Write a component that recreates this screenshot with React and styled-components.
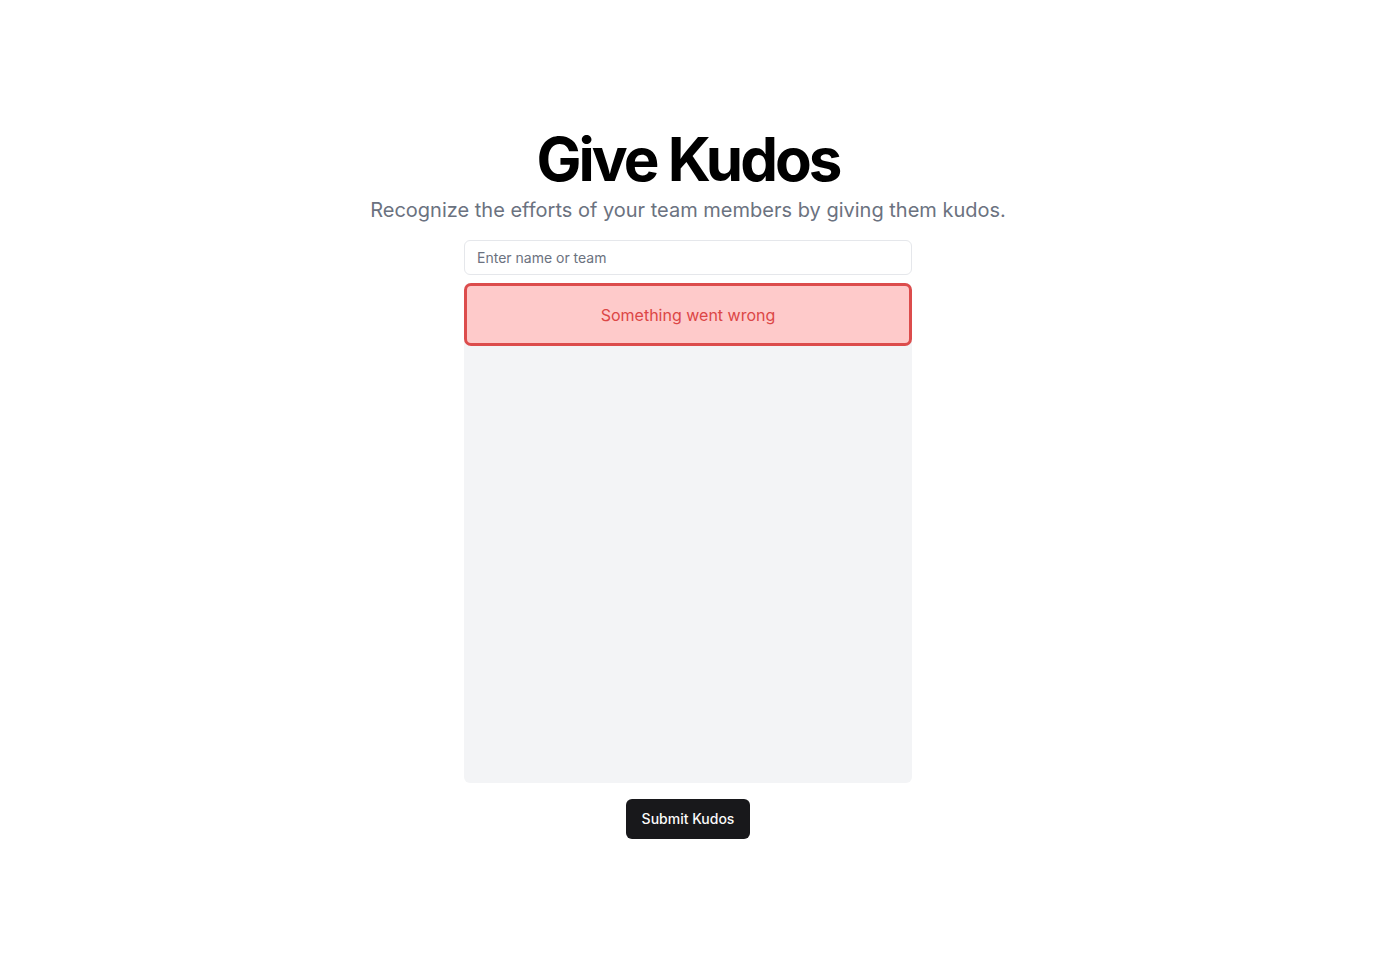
import React, { useState } from "react";
import styled, { createGlobalStyle } from "styled-components";

const GlobalStyle = createGlobalStyle`
  * { box-sizing: border-box; }
  body {
    margin: 0;
    background: #ffffff;
    font-family: Inter, "Liberation Sans", sans-serif;
  }
`;

const Page = styled.main`
  min-height: 100vh;
  display: flex;
  flex-direction: column;
  align-items: center;
  justify-content: center;
`;

const Title = styled.h1`
  margin: 0;
  font-size: 60px;
  line-height: 60px;
  font-weight: 700;
  letter-spacing: -0.05em;
  color: #000;
`;

const Subtitle = styled.p`
  margin: 7px 0 16px;
  font-size: 20px;
  line-height: 28px;
  color: #6b7280;
`;

const Column = styled.div`
  width: 448px;
  display: flex;
  flex-direction: column;
  gap: 8px;
`;

const SearchInput = styled.input`
  width: 100%;
  height: 35px;
  padding: 0 12px;
  border: 1px solid #e5e7eb;
  border-radius: 6px;
  font-family: inherit;
  font-size: 14px;
  color: #111827;
  outline: none;
  &::placeholder {
    color: #6b7280;
  }
`;

const Panel = styled.div`
  height: 500px;
  background: #f3f4f6;
  border-radius: 6px;
`;

const ErrorBox = styled.div`
  border: 3px solid #dc4c4c;
  border-radius: 7px;
  background: #fecaca;
  padding: 17px 16px 16px;
  text-align: center;
  font-size: 16px;
  line-height: 24px;
  color: #dc4646;
`;

const SubmitButton = styled.button`
  margin-top: 16px;
  height: 40px;
  padding: 0 16px;
  border: none;
  border-radius: 6px;
  background: #18181b;
  color: #fafafa;
  font-family: inherit;
  font-size: 14px;
  font-weight: 500;
  cursor: pointer;
`;

export default function App() {
  const [query, setQuery] = useState("");

  return (
    <>
      <GlobalStyle />
      <Page>
        <Title>Give Kudos</Title>
        <Subtitle>Recognize the efforts of your team members by giving them kudos.</Subtitle>
        <Column>
          <SearchInput
            placeholder="Enter name or team"
            value={query}
            onChange={(e) => setQuery(e.target.value)}
          />
          <Panel>
            <ErrorBox>Something went wrong</ErrorBox>
          </Panel>
        </Column>
        <SubmitButton>Submit Kudos</SubmitButton>
      </Page>
    </>
  );
}
